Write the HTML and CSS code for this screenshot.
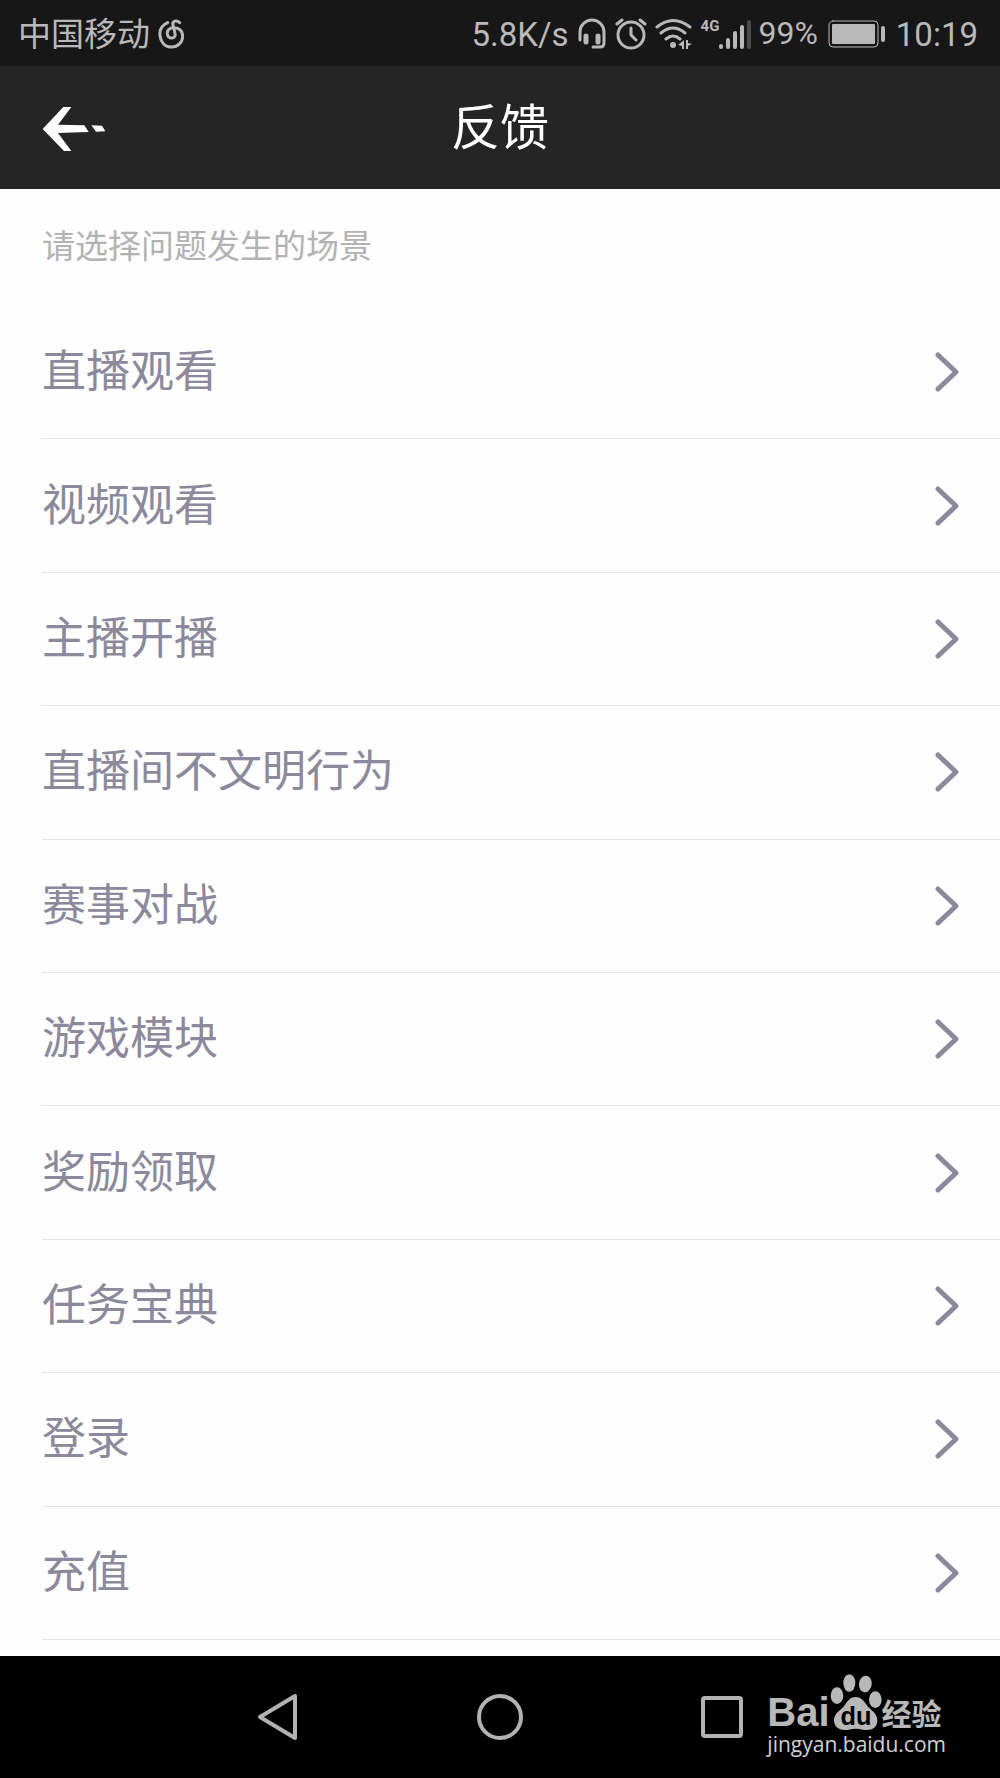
FILE: index.html
```html
<!DOCTYPE html>
<html lang="zh-CN">
<head>
  <meta charset="UTF-8">
  <meta name="viewport" content="width=device-width, initial-scale=1">
  <title>反馈</title>
  <link rel="stylesheet" href="styles.css">
</head>
<body>
  <div class="status-bar">
    <span class="carrier">中国移动</span>
    <svg class="music" width="26" height="30" viewBox="0 0 78 90">
      <path d="M29 11C11 19 4 33 6 50C9 72 23 84 40 84C60 84 74 70 74 52C74 34 62 26 46 26C34 26 27 35 28 45C29 53 35 58 42 57C50 56 53 50 51 43L45 18C42 5 57 2 65 11"/>
    </svg>
    <div class="status-right">
      <span>5.8K/s</span>
      <svg width="30" height="32" viewBox="0 0 30 32">
        <path d="M3 22V14A12 12 0 0 1 27 14V25Q27 29 23 29H16"/>
        <path class="thick" d="M9 18V24M21 18V24"/>
      </svg>
      <svg width="32" height="32" viewBox="0 0 32 32">
        <circle cx="16" cy="17" r="13"/>
        <path d="M16 10V17L21 22M2 6L7 2M25 2L30 6"/>
      </svg>
      <svg width="38" height="32" viewBox="0 0 38 32">
        <path d="M2 9Q18 -4 35 9M6 15Q18 5 30 15M11 21Q18 15 25 21"/>
        <circle class="solid" cx="18" cy="27" r="3"/>
        <path class="solid" d="M29 22V31H27V28L23 27ZM31 22V31H33V28L37 26L33 25V22Z"/>
      </svg>
      <div class="signal">
        <span class="network">4G</span>
        <svg width="33" height="32" viewBox="0 0 33 32">
          <path class="bar" d="M2 28V29M9 22V29M16 15V29M23 9V29"/>
          <path class="bar off" d="M30 4V29"/>
        </svg>
      </div>
      <span class="percent">99%</span>
      <svg class="battery" width="58" height="28" viewBox="0 0 58 28">
        <rect class="case" x="1" y="1" width="49" height="26" rx="4"/>
        <rect class="solid" x="4" y="4" width="43" height="20" rx="1"/>
        <rect class="solid" x="53" y="6" width="4" height="16" rx="2"/>
      </svg>
      <span class="time">10:19</span>
    </div>
  </div>

  <header class="title-bar">
    <button class="back" type="button" aria-label="返回">
      <svg width="64" height="46" viewBox="0 0 192 138">
        <path d="M2 69L64 3H88L48 56L127 58L140 78L48 81L88 135H66ZM148 58L180 59L190 76L162 77Z"/>
      </svg>
    </button>
    <h1>反馈</h1>
  </header>

  <main>
    <p class="hint">请选择问题发生的场景</p>
    <ul class="scenes">
      <li><a href="#live">直播观看<svg class="arrow" viewBox="0 0 24 40"><path d="M3 3L21 20L3 37"/></svg></a></li>
      <li><a href="#video">视频观看<svg class="arrow" viewBox="0 0 24 40"><path d="M3 3L21 20L3 37"/></svg></a></li>
      <li><a href="#anchor">主播开播<svg class="arrow" viewBox="0 0 24 40"><path d="M3 3L21 20L3 37"/></svg></a></li>
      <li><a href="#behavior">直播间不文明行为<svg class="arrow" viewBox="0 0 24 40"><path d="M3 3L21 20L3 37"/></svg></a></li>
      <li><a href="#match">赛事对战<svg class="arrow" viewBox="0 0 24 40"><path d="M3 3L21 20L3 37"/></svg></a></li>
      <li><a href="#game">游戏模块<svg class="arrow" viewBox="0 0 24 40"><path d="M3 3L21 20L3 37"/></svg></a></li>
      <li><a href="#reward">奖励领取<svg class="arrow" viewBox="0 0 24 40"><path d="M3 3L21 20L3 37"/></svg></a></li>
      <li><a href="#task">任务宝典<svg class="arrow" viewBox="0 0 24 40"><path d="M3 3L21 20L3 37"/></svg></a></li>
      <li><a href="#login">登录<svg class="arrow" viewBox="0 0 24 40"><path d="M3 3L21 20L3 37"/></svg></a></li>
      <li><a href="#recharge">充值<svg class="arrow" viewBox="0 0 24 40"><path d="M3 3L21 20L3 37"/></svg></a></li>
    </ul>
  </main>

  <nav class="nav-bar">
    <button type="button" aria-label="返回">
      <svg width="48" height="48" viewBox="0 0 48 48"><path d="M6 24L41 3V45Z"/></svg>
    </button>
    <button type="button" aria-label="主页">
      <svg width="48" height="48" viewBox="0 0 48 48"><circle cx="24" cy="24" r="21"/></svg>
    </button>
    <button type="button" aria-label="最近任务">
      <svg width="48" height="48" viewBox="0 0 48 48"><rect x="5" y="5" width="38" height="38" rx="2"/></svg>
    </button>
    <div class="watermark">
      <div class="brand">
        <span class="bai">Bai</span>
        <svg class="paw" width="52" height="58" viewBox="0 0 156 174">
          <ellipse cx="21" cy="65" rx="19" ry="25"/>
          <ellipse cx="58" cy="27" rx="18" ry="26"/>
          <ellipse cx="106" cy="30" rx="19" ry="25" transform="rotate(8 106 30)"/>
          <ellipse cx="136" cy="77" rx="19" ry="25"/>
          <path d="M77 69C95 69 103 83 113 97C125 111 143 119 142 141C141 159 128 168 111 168C98 168 91 164 77 164C63 164 57 168 44 168C25 168 12 157 12 139C12 119 29 111 42 97C51 83 59 69 77 69Z"/>
          <text x="78" y="152" text-anchor="middle">du</text>
        </svg>
        <span class="jingyan">经验</span>
      </div>
      <div class="site">jingyan.baidu.com</div>
    </div>
  </nav>
</body>
</html>
```
FILE: styles.css
```css
* {
  box-sizing: border-box;
}
body {
  margin: 0;
  min-height: 100vh;
  display: flex;
  flex-direction: column;
  font-family: Roboto, "Noto Sans CJK SC", sans-serif;
  background: #fefefe;
}
button {
  padding: 0;
  border: none;
  background: none;
  cursor: pointer;
}
svg {
  display: block;
  flex: none;
}

/* status bar */
.status-bar {
  display: flex;
  align-items: center;
  height: 66px;
  padding: 2px 22px 0 18px;
  background: #171717;
  color: #b9b9b9;
  font-size: 33px;
  line-height: 40px;
}
.status-bar span {
  padding-top: 2px;
}
.status-bar svg {
  fill: none;
  stroke: #b9b9b9;
  stroke-width: 3;
  stroke-linecap: round;
  stroke-linejoin: round;
}
.status-bar .music {
  margin-left: 8px;
  stroke-width: 9;
}
.status-right {
  display: flex;
  align-items: center;
  gap: 8px;
  margin-left: auto;
}
.status-bar .thick {
  stroke-width: 5;
}
.status-bar .solid {
  fill: #b9b9b9;
  stroke: none;
}
.status-bar .case {
  stroke-width: 1;
}
.status-bar .bar {
  stroke-width: 4;
}
.status-bar .off {
  stroke: #4a4a4a;
}
.signal {
  display: flex;
  align-items: flex-start;
  margin-right: -2px;
}
.status-bar .network {
  padding: 0;
  font-size: 15px;
  line-height: 16px;
  font-weight: 700;
}
.status-bar .percent {
  padding: 0 0 3px;
  font-size: 32px;
}
.battery {
  margin: 0 2px;
}

/* title bar */
.title-bar {
  display: grid;
  grid-template-columns: 1fr auto 1fr;
  align-items: center;
  height: 123px;
  padding: 2px 42px 0;
  background: #252525;
  color: #fff;
}
.back {
  justify-self: start;
}
.back svg {
  fill: #fff;
}
.title-bar h1 {
  margin: 0;
  font-size: 49px;
  line-height: 64px;
  font-weight: 400;
}

/* scene list */
main {
  flex: 1;
  display: flex;
  flex-direction: column;
  padding: 0 0 16px 42px;
}
.hint {
  margin: 0;
  padding: 34px 0 35px;
  color: #b2b2b2;
  font-size: 33px;
  line-height: 48px;
}
.scenes {
  flex: 1;
  display: grid;
  grid-auto-rows: 1fr;
  margin: 0;
  padding: 0;
  list-style: none;
}
.scenes li {
  display: flex;
  border-bottom: 1px solid #e6e6e6;
}
.scenes a {
  flex: 1;
  display: flex;
  align-items: center;
  justify-content: space-between;
  min-height: 96px;
  padding-right: 41px;
  color: #8b899b;
  font-size: 44px;
  line-height: 64px;
  text-decoration: none;
}
.arrow {
  width: 24px;
  height: 40px;
  fill: none;
  stroke: #8b899b;
  stroke-width: 5;
  stroke-linecap: round;
  stroke-linejoin: round;
}

/* navigation bar */
.nav-bar {
  position: relative;
  display: flex;
  justify-content: center;
  height: 122px;
  background: #000;
}
.nav-bar button {
  width: 222px;
}
.nav-bar button svg {
  margin: 0 auto;
  fill: none;
  stroke: #b2b2b2;
  stroke-width: 4;
  stroke-linejoin: round;
}
.watermark {
  position: absolute;
  right: 54px;
  bottom: 22px;
  color: #b8b8b8;
}
.brand {
  display: flex;
  align-items: flex-end;
}
.bai {
  font-family: "Liberation Sans", sans-serif;
  font-size: 40px;
  line-height: 40px;
  font-weight: 700;
}
.paw {
  fill: #b8b8b8;
}
.paw text {
  fill: #000;
  font-family: "Liberation Sans", sans-serif;
  font-size: 76px;
  font-weight: 700;
}
.jingyan {
  font-family: "Noto Sans CJK SC", sans-serif;
  font-size: 30px;
  line-height: 40px;
  font-weight: 700;
}
.site {
  color: #d0d0d0;
  font-family: "Open Sans", sans-serif;
  font-size: 21px;
  line-height: 24px;
}
```
